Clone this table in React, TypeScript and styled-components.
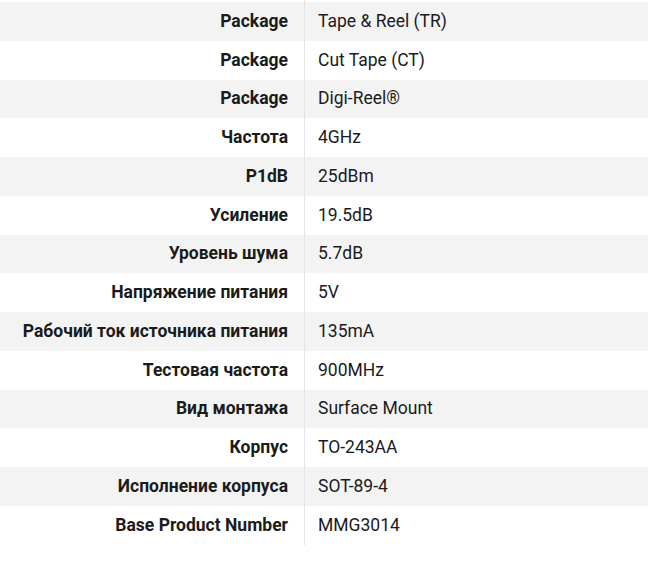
import React from "react";
import styled, { createGlobalStyle } from "styled-components";

const Global = createGlobalStyle`
  html, body { margin: 0; padding: 0; background: #ffffff; }
  body { font-family: Roboto, "Noto Sans", sans-serif; color: #1b1b1b; }
`;

const Table = styled.div`
  display: flex;
  flex-direction: column;
  width: 648px;
`;

const Row = styled.div<{ $shade?: boolean; $cap?: boolean }>`
  display: grid;
  grid-template-columns: 304px 1fr;
  height: ${(p) => (p.$cap ? "2px" : "38.75px")};
  background: ${(p) => (p.$shade ? "#f3f3f3" : "#ffffff")};
  font-size: 17.5px;
  line-height: 20px;
`;

const Label = styled.div`
  display: flex;
  align-items: center;
  justify-content: flex-end;
  padding-right: 16px;
  padding-bottom: 1px;
  font-weight: 700;
  white-space: nowrap;
`;

const Value = styled.div`
  display: flex;
  align-items: center;
  padding-left: 13px;
  padding-bottom: 1px;
  border-left: 1px solid #e4e4e4;
  white-space: nowrap;
`;

const rows: [string, string][] = [
  ["Package", "Tape & Reel (TR)"],
  ["Package", "Cut Tape (CT)"],
  ["Package", "Digi-Reel®"],
  ["Частота", "4GHz"],
  ["P1dB", "25dBm"],
  ["Усиление", "19.5dB"],
  ["Уровень шума", "5.7dB"],
  ["Напряжение питания", "5V"],
  ["Рабочий ток источника питания", "135mA"],
  ["Тестовая частота", "900MHz"],
  ["Вид монтажа", "Surface Mount"],
  ["Корпус", "TO-243AA"],
  ["Исполнение корпуса", "SOT-89-4"],
  ["Base Product Number", "MMG3014"],
];

export default function App() {
  return (
    <>
      <Global />
      <Table>
        <Row $cap>
          <Label />
          <Value />
        </Row>
        {rows.map(([k, v], i) => (
          <Row key={i} $shade={i % 2 === 0}>
            <Label>{k}</Label>
            <Value>{v}</Value>
          </Row>
        ))}
      </Table>
    </>
  );
}
